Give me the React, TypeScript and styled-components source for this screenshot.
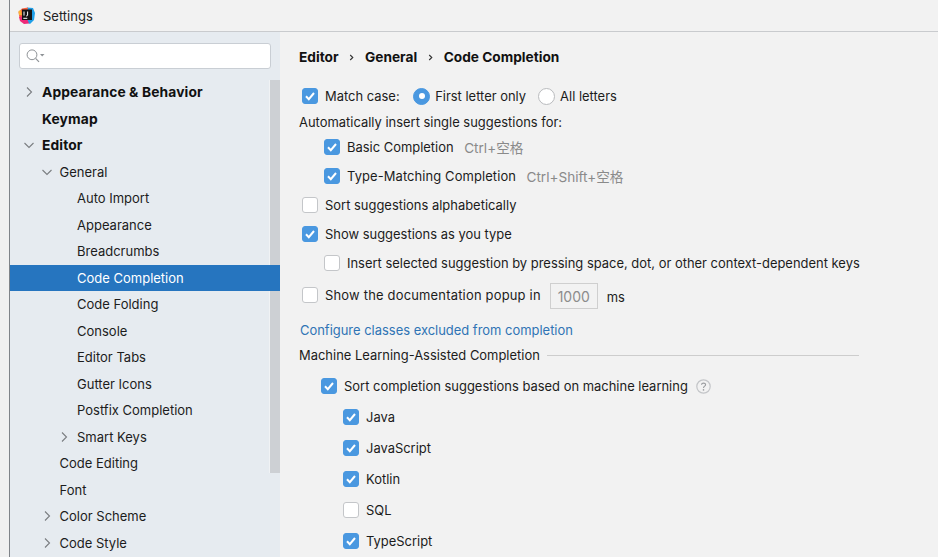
import React from "react";
import styled, { createGlobalStyle } from "styled-components";

const Global = createGlobalStyle`
  html, body { margin: 0; padding: 0; height: 100%; background: #f2f2f2; overflow: hidden; }
  body { font-family: Inter, "Noto Sans CJK SC", sans-serif; font-size: 12.95px; color: #1c1c1c; }
  #root { height: 100%; }
`;

const Page = styled.div`
  width: 938px;
  height: 557px;
  display: flex;
  overflow: hidden;
`;
const Gutter = styled.div`
  width: 9px;
  flex: none;
  background: #f0f0f0;
  border-right: 1px solid #7f8388;
`;
const Window = styled.div`
  flex: 1;
  min-width: 0;
  display: flex;
  flex-direction: column;
`;
const TitleBar = styled.div`
  height: 31px;
  flex: none;
  display: flex;
  align-items: center;
  gap: 8px;
  padding: 0 0 0 8px;
  background: #f2f2f2;
  border-bottom: 1px solid #c9cbce;
  font-size: 13px;
  color: #222;
`;
const Body = styled.div`
  flex: 1;
  min-height: 0;
  display: flex;
`;
const Sidebar = styled.div`
  width: 270px;
  flex: none;
  background: #e6ebf0;
  display: flex;
  flex-direction: column;
  position: relative;
`;
const SearchWrap = styled.div`
  height: 47.3px;
  flex: none;
  padding: 11px 9px 0 9px;
  box-sizing: border-box;
`;
const SearchBox = styled.div`
  height: 26px;
  box-sizing: border-box;
  background: #fff;
  border: 1px solid #c9ced4;
  border-radius: 3px;
  display: flex;
  align-items: center;
  padding-left: 6px;
`;
const Scrollbar = styled.div`
  position: absolute;
  right: 0;
  top: 48px;
  width: 10px;
  height: 393px;
  background: #cdd0d4;
  border-left: 1px solid #f0f2f4;
  box-sizing: content-box;
`;
const Tree = styled.div`
  position: relative;
  z-index: 1;
  display: flex;
  flex-direction: column;
`;
const TreeRow = styled.div<{ $depth: number; $selected?: boolean; $bold?: boolean }>`
  height: 26.47px;
  flex: none;
  display: flex;
  align-items: center;
  padding-left: ${(p) => 13 + p.$depth * 17.5}px;
  font-weight: ${(p) => (p.$bold ? 700 : 400)};
  font-size: ${(p) => (p.$bold ? "13.8px" : "13px")};
  letter-spacing: ${(p) => (p.$bold ? "0.13px" : "0")};
  background: ${(p) => (p.$selected ? "#2675bf" : "transparent")};
  color: ${(p) => (p.$selected ? "#fff" : p.$bold ? "#111" : "#1c1c1c")};
  &:first-child {
    padding-bottom: 1px;
    box-sizing: border-box;
  }
`;
const Arrow = styled.span`
  width: 12px;
  height: 12px;
  margin-right: 7px;
  flex: none;
  display: flex;
  align-items: center;
  justify-content: center;
  color: #7a7d80;
`;
const Panel = styled.div`
  flex: 1;
  min-width: 0;
  padding-left: 19px;
  display: flex;
  flex-direction: column;
  background: #f2f2f2;
`;
const Crumbs = styled.div`
  margin-top: 15px;
  height: 20px;
  display: flex;
  align-items: center;
  font-weight: 700;
  font-size: 13.7px;
  color: #111;
`;
const CrumbSep = styled.span`
  width: 26.5px;
  display: flex;
  justify-content: center;
  color: #444;
`;
const Row = styled.div<{ $top: number; $indent?: number }>`
  margin-top: ${(p) => p.$top}px;
  margin-left: ${(p) => p.$indent ?? 0}px;
  height: 20px;
  flex: none;
  display: flex;
  align-items: center;
  white-space: nowrap;
`;
const Box = styled.span<{ $on?: boolean }>`
  width: 16px;
  height: 16px;
  flex: none;
  box-sizing: border-box;
  margin-right: 7px;
  border-radius: 3px;
  display: flex;
  align-items: center;
  justify-content: center;
  background: ${(p) => (p.$on ? "#4a98e0" : "#fff")};
  border: 1px solid ${(p) => (p.$on ? "#4a98e0" : "#c4c6c9")};
`;
const RadioDot = styled.span<{ $on?: boolean }>`
  width: 17px;
  height: 17px;
  flex: none;
  box-sizing: border-box;
  border-radius: 50%;
  margin-right: 5px;
  display: flex;
  align-items: center;
  justify-content: center;
  background: ${(p) => (p.$on ? "#4a98e0" : "#fff")};
  border: 1px solid ${(p) => (p.$on ? "#4a98e0" : "#b9bbbe")};
  &::after {
    content: "";
    display: ${(p) => (p.$on ? "block" : "none")};
    width: 6px;
    height: 6px;
    border-radius: 50%;
    background: #fff;
  }
`;
const Gap = styled.span<{ $w: number }>`
  width: ${(p) => p.$w}px;
  flex: none;
`;
const Shortcut = styled.span`
  margin-left: 10.5px;
  color: #8a8a8a;
  font-size: 13.6px;
`;
const WideLabel = styled.span<{ $spacing: number }>`
  letter-spacing: ${(p) => p.$spacing}px;
`;
const NumberField = styled.span`
  width: 48px;
  height: 26px;
  box-sizing: border-box;
  margin: 2px 9px 0 9px;
  border: 1px solid #cfcfcf;
  color: #8c8c8c;
  font-size: 14px;
  display: flex;
  align-items: center;
  justify-content: center;
`;
const Unit = styled.span`
  margin-top: 4px;
`;
const LinkText = styled.span`
  color: #2f74b5;
  margin-left: 1px;
`;
const TitledRule = styled.span`
  width: 312px;
  height: 1px;
  margin-left: 7px;
  background: #cdcdcd;
  flex: none;
`;
const Help = styled.span`
  margin-left: 8px;
  width: 15px;
  height: 15px;
  display: flex;
`;

const Check = () => (
  <svg width="12" height="12" viewBox="0 0 12 12" fill="none">
    <path d="M2 6.3 L4.8 9.2 L10 3" stroke="#fff" strokeWidth="2" />
  </svg>
);
const Checkbox = ({ on }: { on?: boolean }) => <Box $on={on}>{on && <Check />}</Box>;

const Chevron = ({ dir }: { dir: "right" | "down" }) => (
  <svg width="12" height="12" viewBox="0 0 12 12" fill="none" stroke="currentColor" strokeWidth="1.1">
    {dir === "right" ? <path d="M4 1.5 L8.5 6 L4 10.5" /> : <path d="M1.5 4 L6 8.5 L10.5 4" />}
  </svg>
);

const Logo = () => (
  <svg width="17" height="18" viewBox="0 0 17 18">
    <path d="M9 0.5 L15 1 L17 6 L16 13 L12 17 L8 15 Z" fill="#1f9fe8" />
    <path d="M0.5 5 L4 1.5 L10 0.5 L8 10 L1.5 11 Z" fill="#fa5f3c" />
    <path d="M0.5 4 L3 3 L4 8 L1 8 Z" fill="#f9b233" />
    <path d="M1 10 L8 9 L11 16.5 L6 17 L2 14 Z" fill="#ee2a78" />
    <rect x="4" y="2.5" width="10" height="10.5" fill="#141414" />
    <rect x="5.3" y="10.8" width="4" height="1" fill="#fff" />
    <path d="M6 4.5 V8.6 M9.6 4.5 V8.2 Q9.6 9 8.2 9" fill="none" stroke="#fff" strokeWidth="1" />
  </svg>
);

const SearchIcon = () => (
  <svg width="20" height="14" viewBox="0 0 20 14" fill="none">
    <circle cx="6" cy="5.8" r="4.9" stroke="#8e9296" strokeWidth="1" />
    <path d="M9.6 9.4 L13 12.8" stroke="#8e9296" strokeWidth="1.2" />
    <path d="M14 5 L18.5 5 L16.2 7.6 Z" fill="#8e9296" />
  </svg>
);

const HelpIcon = () => (
  <svg width="15" height="15" viewBox="0 0 15 15" fill="none">
    <circle cx="7.5" cy="7.5" r="6.7" stroke="#c3c5c8" strokeWidth="1.2" />
    <path d="M5.5 5.8 C5.6 3.6 9.6 3.6 9.6 5.8 C9.6 7.2 7.5 7.2 7.5 8.9" stroke="#9a9c9f" strokeWidth="1.1" />
    <circle cx="7.5" cy="10.9" r="0.8" fill="#9a9c9f" />
  </svg>
);

const Sep = () => (
  <CrumbSep>
    <svg width="5" height="7" viewBox="0 0 5 7" fill="none">
      <path d="M1.2 1 L3.8 3.5 L1.2 6" stroke="#333" strokeWidth="1.1" />
    </svg>
  </CrumbSep>
);

type Node = { label: string; depth: number; arrow?: "right" | "down"; bold?: boolean; selected?: boolean };
const nodes: Node[] = [
  { label: "Appearance & Behavior", depth: 0, arrow: "right", bold: true },
  { label: "Keymap", depth: 0, bold: true },
  { label: "Editor", depth: 0, arrow: "down", bold: true },
  { label: "General", depth: 1, arrow: "down" },
  { label: "Auto Import", depth: 2 },
  { label: "Appearance", depth: 2 },
  { label: "Breadcrumbs", depth: 2 },
  { label: "Code Completion", depth: 2, selected: true },
  { label: "Code Folding", depth: 2 },
  { label: "Console", depth: 2 },
  { label: "Editor Tabs", depth: 2 },
  { label: "Gutter Icons", depth: 2 },
  { label: "Postfix Completion", depth: 2 },
  { label: "Smart Keys", depth: 2, arrow: "right" },
  { label: "Code Editing", depth: 1 },
  { label: "Font", depth: 1 },
  { label: "Color Scheme", depth: 1, arrow: "right" },
  { label: "Code Style", depth: 1, arrow: "right" },
];

export default function App() {
  return (
    <Page>
      <Global />
      <Gutter />
      <Window>
        <TitleBar>
          <Logo />
          Settings
        </TitleBar>
        <Body>
          <Sidebar>
            <SearchWrap>
              <SearchBox>
                <SearchIcon />
              </SearchBox>
            </SearchWrap>
            <Scrollbar />
            <Tree>
              {nodes.map((n) => (
                <TreeRow key={n.label} $depth={n.depth} $bold={n.bold} $selected={n.selected}>
                  <Arrow>{n.arrow && <Chevron dir={n.arrow} />}</Arrow>
                  {n.label}
                </TreeRow>
              ))}
            </Tree>
          </Sidebar>
          <Panel>
            <Crumbs>
              Editor
              <Sep />
              General
              <Sep />
              Code Completion
            </Crumbs>
            <Row $top={19} $indent={3}>
              <Checkbox on />
              Match case:
              <Gap $w={13.5} />
              <RadioDot $on />
              First letter only
              <Gap $w={12} />
              <RadioDot />
              All letters
            </Row>
            <Row $top={6}>Automatically insert single suggestions for:</Row>
            <Row $top={5} $indent={25}>
              <Checkbox on />
              Basic Completion
              <Shortcut>Ctrl+空格</Shortcut>
            </Row>
            <Row $top={9} $indent={25}>
              <Checkbox on />
              <WideLabel $spacing={0.1}>Type-Matching Completion</WideLabel>
              <Shortcut>Ctrl+Shift+空格</Shortcut>
            </Row>
            <Row $top={9} $indent={3}>
              <Checkbox />
              Sort suggestions alphabetically
            </Row>
            <Row $top={9} $indent={3}>
              <Checkbox on />
              Show suggestions as you type
            </Row>
            <Row $top={9} $indent={25}>
              <Checkbox />
              Insert selected suggestion by pressing space, dot, or other context-dependent keys
            </Row>
            <Row $top={12} $indent={3}>
              <Checkbox />
              <WideLabel $spacing={0.2}>Show the documentation popup in</WideLabel>
              <NumberField>1000</NumberField>
              <Unit>ms</Unit>
            </Row>
            <Row $top={15}>
              <LinkText>Configure classes excluded from completion</LinkText>
            </Row>
            <Row $top={5}>
              Machine Learning-Assisted Completion
              <TitledRule />
            </Row>
            <Row $top={11} $indent={22}>
              <Checkbox on />
              Sort completion suggestions based on machine learning
              <Help>
                <HelpIcon />
              </Help>
            </Row>
            <Row $top={11} $indent={44}>
              <Checkbox on />
              Java
            </Row>
            <Row $top={11} $indent={44}>
              <Checkbox on />
              JavaScript
            </Row>
            <Row $top={11} $indent={44}>
              <Checkbox on />
              Kotlin
            </Row>
            <Row $top={11} $indent={44}>
              <Checkbox />
              SQL
            </Row>
            <Row $top={11} $indent={44}>
              <Checkbox on />
              TypeScript
            </Row>
          </Panel>
        </Body>
      </Window>
    </Page>
  );
}
